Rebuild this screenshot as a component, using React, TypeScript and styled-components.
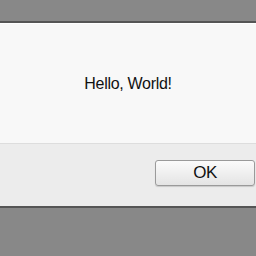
import styled, { createGlobalStyle } from "styled-components";

const GlobalStyle = createGlobalStyle`
  html, body {
    margin: 0;
    padding: 0;
    width: 256px;
    height: 256px;
    overflow: hidden;
    background: #888888;
  }
  * {
    box-sizing: border-box;
  }
`;

const Screen = styled.div`
  width: 256px;
  height: 256px;
  padding-top: 21px;
  background: #888888;
`;

const Dialog = styled.div`
  display: flex;
  flex-direction: column;
  border-top: 2px solid #555555;
  border-bottom: 2px solid #555555;
  font-family: "Liberation Sans", Arial, sans-serif;
`;

const Body = styled.div`
  height: 121px;
  background: #f8f8f8;
  border-top: 1px solid #ffffff;
  border-bottom: 1px solid #dddddd;
  display: flex;
  align-items: center;
  justify-content: center;
  padding-top: 1px;
  color: #111111;
  font-size: 16px;
  letter-spacing: -0.3px;
`;

const Footer = styled.div`
  height: 62px;
  background: #ececec;
  display: flex;
  justify-content: flex-end;
  align-items: flex-start;
  padding-top: 16px;
  padding-right: 1px;
`;

const Button = styled.button`
  width: 100px;
  height: 26px;
  border: 1px solid #9a9a9a;
  border-radius: 3px;
  background: linear-gradient(#fbfbfb, #e4e4e4);
  box-shadow: 0 1px 1px rgba(0, 0, 0, 0.15);
  font-family: "Liberation Sans", Arial, sans-serif;
  font-size: 17px;
  letter-spacing: -0.5px;
  color: #111111;
  padding: 0;
`;

const App = () => {
  return (
    <>
      <GlobalStyle />
      <Screen>
        <Dialog>
          <Body>Hello, World!</Body>
          <Footer>
            <Button>OK</Button>
          </Footer>
        </Dialog>
      </Screen>
    </>
  );
};

export default App;
